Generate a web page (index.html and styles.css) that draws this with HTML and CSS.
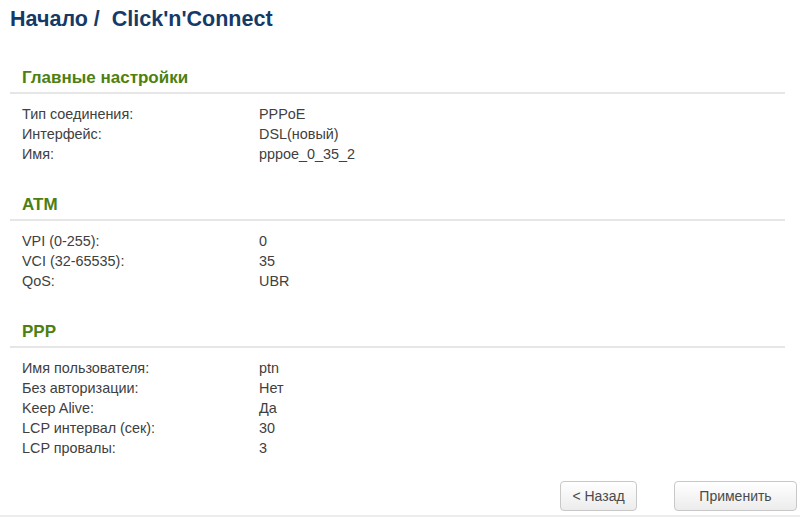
FILE: index.html
```html
<!DOCTYPE html>
<html lang="ru">
<head>
<meta charset="utf-8">
<link rel="stylesheet" href="styles.css">
</head>
<body>
<div class="page">
  <h1 class="title">Начало /&nbsp; Click'n'Connect</h1>

  <section class="group">
    <h2 class="group-head">Главные настройки</h2>
    <div class="rows">
      <div class="row"><span class="lbl">Тип соединения:</span><span class="val">PPPoE</span></div>
      <div class="row"><span class="lbl">Интерфейс:</span><span class="val">DSL(новый)</span></div>
      <div class="row"><span class="lbl">Имя:</span><span class="val">pppoe_0_35_2</span></div>
    </div>
  </section>

  <section class="group">
    <h2 class="group-head">ATM</h2>
    <div class="rows">
      <div class="row"><span class="lbl">VPI (0-255):</span><span class="val">0</span></div>
      <div class="row"><span class="lbl">VCI (32-65535):</span><span class="val">35</span></div>
      <div class="row"><span class="lbl">QoS:</span><span class="val">UBR</span></div>
    </div>
  </section>

  <section class="group">
    <h2 class="group-head">PPP</h2>
    <div class="rows">
      <div class="row"><span class="lbl">Имя пользователя:</span><span class="val">ptn</span></div>
      <div class="row"><span class="lbl">Без авторизации:</span><span class="val">Нет</span></div>
      <div class="row"><span class="lbl">Keep Alive:</span><span class="val">Да</span></div>
      <div class="row"><span class="lbl">LCP интервал (сек):</span><span class="val">30</span></div>
      <div class="row"><span class="lbl">LCP провалы:</span><span class="val">3</span></div>
    </div>
  </section>

  <div class="actions">
    <button class="btn btn-back">&lt; Назад</button>
    <button class="btn btn-apply">Применить</button>
  </div>
</div>
</body>
</html>
```

FILE: styles.css
```css
html, body {
  margin: 0;
  padding: 0;
  background: #ffffff;
}
body {
  font-family: "Liberation Sans", Arial, sans-serif;
  color: #404040;
  width: 800px;
  height: 517px;
  overflow: hidden;
}
.page {
  display: flex;
  flex-direction: column;
  height: 517px;
  box-sizing: border-box;
  border-bottom: 2px solid #ececec;
}
.title {
  margin: 7px 0 0 10px;
  font-size: 21.5px;
  line-height: 24px;
  font-weight: bold;
  color: #163a68;
}
.group {
  margin: 0 15px 0 10px;
}
.group-head {
  margin: 0;
  padding: 0 0 4px 12px;
  font-size: 17px;
  line-height: 20px;
  font-weight: bold;
  color: #4d7f12;
  border-bottom: 2px solid #e6e6e6;
}
.group:first-of-type {
  margin-top: 37px;
}
.rows {
  padding: 10px 0 0 12px;
}
.row {
  display: flex;
  font-size: 14.4px;
  line-height: 20px;
}
.lbl {
  width: 237px;
}
.val {
  flex: 1;
}
.group + .group {
  margin-top: 31px;
}
.actions {
  margin-top: auto;
  display: flex;
  justify-content: flex-end;
  gap: 37px;
  padding: 0 3px 4px 0;
}
.btn {
  font-family: "Liberation Sans", Arial, sans-serif;
  font-size: 14px;
  color: #4a4a4a;
  height: 30px;
  border: 1px solid #c8c8c8;
  border-radius: 4px;
  background: linear-gradient(#ffffff, #ececec);
  padding: 0;
}
.btn-back {
  width: 77px;
}
.btn-apply {
  width: 123px;
}
```
